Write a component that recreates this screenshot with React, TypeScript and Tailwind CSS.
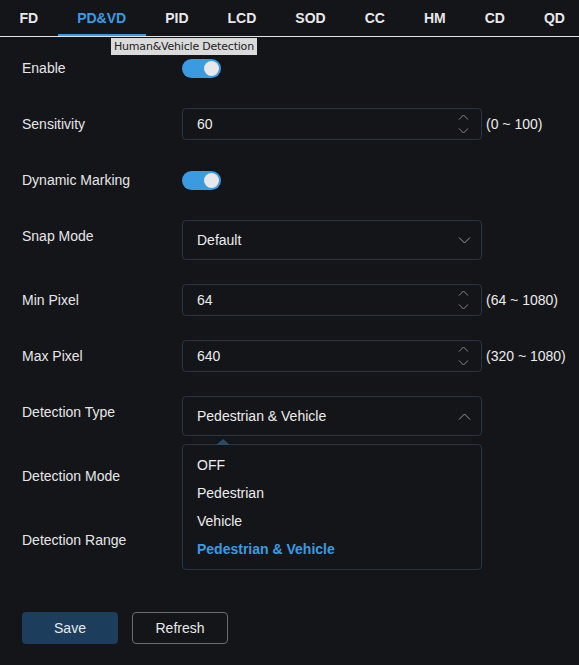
import React from "react";

const tabs = ["FD", "PD&VD", "PID", "LCD", "SOD", "CC", "HM", "CD", "QD"];

function Toggle() {
  return (
    <div className="h-8 flex items-center">
      <div className="w-[39px] h-[19px] rounded-full bg-[#3b9be0] relative">
        <div className="absolute right-[2px] top-[2px] w-[15px] h-[15px] rounded-full bg-[#e8e8ea]" />
      </div>
    </div>
  );
}

function Spin() {
  return (
    <div className="flex flex-col items-center gap-[8px] mr-[12px]">
      <svg width="11" height="6" viewBox="0 0 11 6">
        <path d="M1 5.5 L5.5 1 L10 5.5" fill="none" stroke="#8a8a8e" strokeWidth="1" />
      </svg>
      <svg width="11" height="6" viewBox="0 0 11 6">
        <path d="M1 0.5 L5.5 5 L10 0.5" fill="none" stroke="#8a8a8e" strokeWidth="1" />
      </svg>
    </div>
  );
}

function NumInput({ value, range }: { value: string; range: string }) {
  return (
    <div className="flex items-center">
      <div className="w-[300px] h-8 border border-[#273647] rounded-[4px] flex items-center justify-between pl-[14px]">
        <span className="text-[14px] text-[#ececec]">{value}</span>
        <Spin />
      </div>
      <span className="ml-[4px] text-[14px] text-[#ececec]">{range}</span>
    </div>
  );
}

function Select({ value, open }: { value: string; open?: boolean }) {
  return (
    <div className="w-[300px] h-10 border border-[#273647] rounded-[4px] flex items-center justify-between pl-[14px] pr-[10px]">
      <span className="text-[14px] text-[#ececec]">{value}</span>
      <svg width="13" height="7" viewBox="0 0 13 7">
        {open ? (
          <path d="M1 6.5 L6.5 1 L12 6.5" fill="none" stroke="#9a9a9e" strokeWidth="1" />
        ) : (
          <path d="M1 0.5 L6.5 6 L12 0.5" fill="none" stroke="#9a9a9e" strokeWidth="1" />
        )}
      </svg>
    </div>
  );
}

function Row({ label, children }: { label: string; children?: React.ReactNode }) {
  return (
    <div className="flex mb-6">
      <div className="w-[160px] leading-8 text-[14px] text-[#e6e6e8]">{label}</div>
      <div>{children}</div>
    </div>
  );
}

export default function App() {
  return (
    <div
      className="w-[579px] h-[665px] bg-[#141519] relative overflow-hidden"
      style={{ fontFamily: '"Liberation Sans", Arial, sans-serif' }}
    >
      <div className="flex h-[37px] border-b border-[#e4e4e4]">
        {tabs.map((t, i) => (
          <div
            key={t}
            className={
              "relative px-[19.5px] h-9 flex items-center text-[14px] font-bold " +
              (i === 1 ? "text-[#3b9be0]" : "text-[#e8e8ea]")
            }
          >
            {t}
            {i === 1 && <div className="absolute left-0 right-0 bottom-0 h-[2px] bg-[#3b9be0]" />}
          </div>
        ))}
      </div>
      <div
        className="absolute left-[111px] top-[38px] h-[17px] px-[3px] bg-[#dadada] text-[#222] text-[11px] leading-[17px] tracking-[-0.2px]"
        style={{ fontFamily: '"DejaVu Sans", sans-serif' }}
      >
        Human&amp;Vehicle Detection
      </div>

      <div className="pl-[22px] pt-[15px]">
        <Row label="Enable">
          <Toggle />
        </Row>
        <Row label="Sensitivity">
          <NumInput value="60" range="(0 ~ 100)" />
        </Row>
        <Row label="Dynamic Marking">
          <Toggle />
        </Row>
        <Row label="Snap Mode">
          <Select value="Default" />
        </Row>
        <Row label="Min Pixel">
          <NumInput value="64" range="(64 ~ 1080)" />
        </Row>
        <Row label="Max Pixel">
          <NumInput value="640" range="(320 ~ 1080)" />
        </Row>
        <Row label="Detection Type">
          <div className="relative">
            <Select value="Pedestrian & Vehicle" open />
            <div className="absolute left-0 top-[48px] w-[300px] h-[126px] border border-[#273647] rounded-[4px] bg-[#141519] z-10 pt-[6px]">
              <svg className="absolute left-[33px] top-[-6px]" width="14" height="6" viewBox="0 0 14 6">
                <path d="M0 6 L7 0 L14 6 Z" fill="#2a4a66" />
              </svg>
              {["OFF", "Pedestrian", "Vehicle", "Pedestrian & Vehicle"].map((o, i) => (
                <div
                  key={o}
                  className={
                    "h-7 flex items-center px-[14px] text-[14px] " +
                    (i === 3 ? "text-[#3b9be0] font-bold" : "text-[#ececec]")
                  }
                >
                  {o}
                </div>
              ))}
            </div>
          </div>
        </Row>
        <Row label="Detection Mode">
          <div className="h-10 w-[300px]" />
        </Row>
        <Row label="Detection Range">
          <div className="h-10 w-[300px]" />
        </Row>
        <div className="flex gap-[14px] pt-6">
          <button className="w-[96px] h-8 rounded-[4px] bg-[#1d3d5c] text-[14px] text-[#e8e8ea]">Save</button>
          <button className="w-[96px] h-8 rounded-[4px] border border-[#6a6a6e] text-[14px] text-[#e8e8ea]">
            Refresh
          </button>
        </div>
      </div>
    </div>
  );
}
